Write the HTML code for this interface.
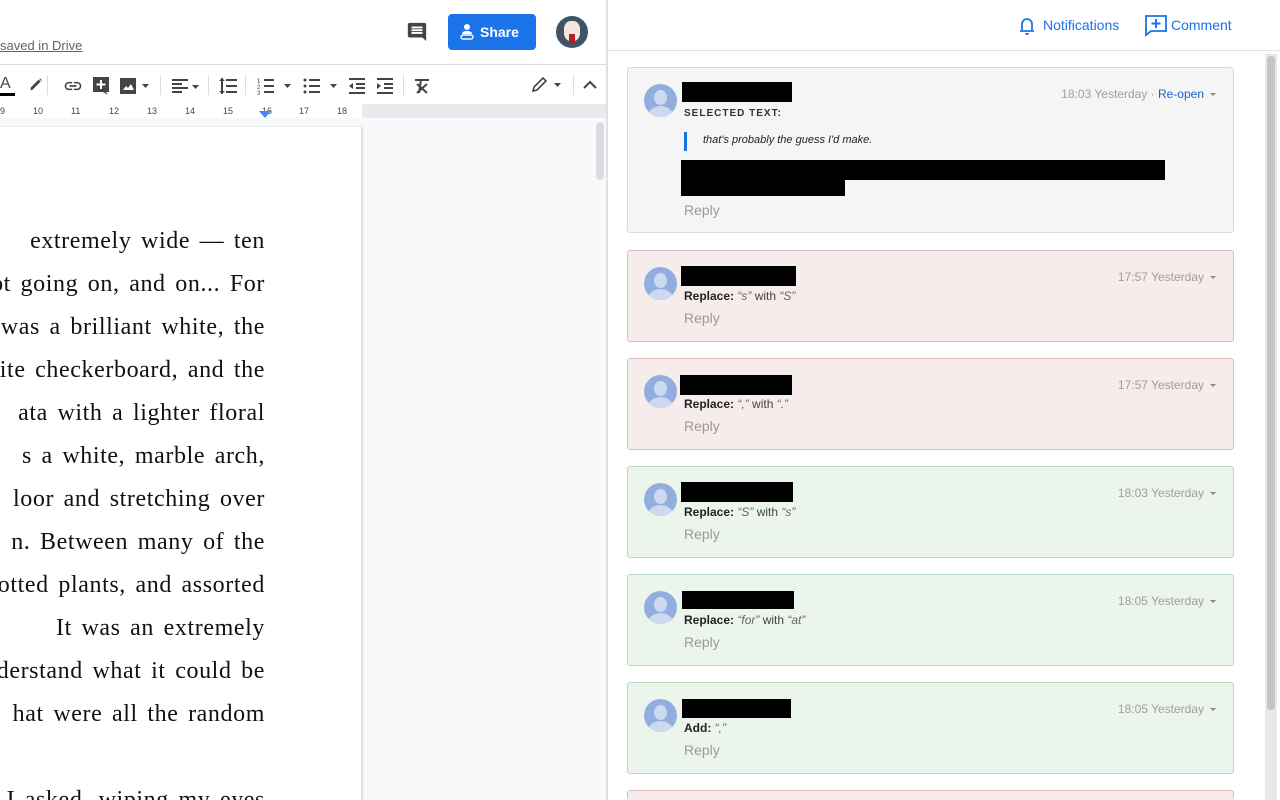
<!DOCTYPE html>
<html><head><meta charset="utf-8"><style>
*{margin:0;padding:0;box-sizing:border-box}
html,body{width:1280px;height:800px;overflow:hidden}
body{position:relative;background:#fff;font-family:"Liberation Sans",sans-serif}
.a{position:absolute}
.doc{left:0;top:118px;width:606px;height:682px;background:#f8f9fa;overflow:hidden}
.page{left:0;top:9px;width:362px;height:700px;background:#fff;border-right:1px solid #dadce0;box-shadow:1px 0 2px rgba(0,0,0,.12)}
.ln{position:absolute;right:341px;white-space:nowrap;font-family:"Liberation Serif",serif;font-size:24px;color:#111;text-align:right;letter-spacing:0.6px;word-spacing:3px}
.card{position:absolute;left:627px;width:607px;border:1px solid;border-radius:3px}
.g{background:#f5f5f5;border-color:#dadada}
.p{background:#f6eceb;border-color:#dcbcba}
.n{background:#ebf5ec;border-color:#bcd9bf}
.av{position:absolute;left:16px;width:33px;height:33px;border-radius:50%;background:#92aedf;overflow:hidden}
.av:before{content:"";position:absolute;left:10px;top:6px;width:13px;height:15px;border-radius:50%;background:#ccd9f0}
.av:after{content:"";position:absolute;left:4px;top:22px;width:25px;height:20px;border-radius:50%;background:#ccd9f0}
.nm{position:absolute;background:#000;height:20px}
.ts{position:absolute;right:29px;font-family:"Liberation Sans Narrow","Liberation Sans",sans-serif;font-size:12px;color:#9e9e9e}
.ar{position:absolute;right:17px;width:0;height:0;border-left:3px solid transparent;border-right:3px solid transparent;border-top:3px solid #888}
.tx{position:absolute;left:56px;font-family:"Liberation Sans Narrow","Liberation Sans",sans-serif;font-size:12px;color:#444}
.tx b{color:#222}
.tx i{color:#666}
.rp{position:absolute;left:56px;font-family:"Liberation Sans Narrow","Liberation Sans",sans-serif;font-size:14px;color:#9a9a9a}
</style></head><body>
<div class="a" style="left:0;top:38px;font-size:13px;color:#5f6368;text-decoration:underline">saved in Drive</div>
<svg class="a" style="left:406px;top:21px" width="22" height="22" viewBox="0 0 24 24"><path fill="#444" d="M21.99 4c0-1.1-.89-2-1.99-2H4c-1.1 0-2 .9-2 2v12c0 1.1.9 2 2 2h14l4 4-.01-18zM18 14H6v-2h12v2zm0-3H6V9h12v2zm0-3H6V6h12v2z"/></svg>
<div class="a" style="left:448px;top:14px;width:88px;height:36px;background:#1a73e8;border-radius:4px;color:#fff;font-size:14px;font-weight:bold;line-height:36px;padding-left:32px">Share</div>
<svg class="a" style="left:459px;top:23px" width="16" height="18" viewBox="0 0 16 18"><circle cx="8" cy="4" r="3" fill="#fff"/><path d="M3 11c0-2 2-3 5-3s5 1 5 3z" fill="#fff"/><rect x="2" y="12" width="12" height="4" rx="2" fill="none" stroke="#fff" stroke-width="1.4"/></svg>
<div class="a" style="left:556px;top:16px;width:32px;height:32px;border-radius:50%;background:#3d5566;overflow:hidden"><div class="a" style="left:8px;top:5px;width:16px;height:20px;background:#f3e6df;border-radius:40%"></div><div class="a" style="left:13px;top:18px;width:6px;height:10px;background:#b0202a"></div></div>
<div class="a" style="left:0;top:64px;width:606px;height:1px;background:#dadce0"></div>
<div class="a" style="left:0;top:75px;font-size:16px;color:#444">A</div>
<div class="a" style="left:0;top:93px;width:15px;height:3px;background:#000"></div>
<svg class="a" style="left:28px;top:77px" width="16" height="16" viewBox="0 0 24 24"><path fill="#444" d="M4 20l3-1 12-12-3-3L4 16zM17 3l3 3 1-1-3-3z"/></svg>
<div class="a" style="left:47px;top:75px;width:1px;height:20px;background:#dadce0"></div>
<svg class="a" style="left:63px;top:76px" width="20" height="20" viewBox="0 0 24 24"><path fill="#444" d="M3.9 12c0-1.71 1.39-3.1 3.1-3.1h4V7H7c-2.76 0-5 2.24-5 5s2.24 5 5 5h4v-1.9H7c-1.71 0-3.1-1.39-3.1-3.1zM8 13h8v-2H8v2zm9-6h-4v1.9h4c1.71 0 3.1 1.39 3.1 3.1s-1.39 3.1-3.1 3.1h-4V17h4c2.76 0 5-2.24 5-5s-2.24-5-5-5z"/></svg>
<svg class="a" style="left:92px;top:76px" width="18" height="20" viewBox="0 0 18 20"><path fill="#444" d="M1 1h16v15h-3l2 3-5-3H1z"/><path stroke="#fff" stroke-width="2" d="M9 4v9M4.5 8.5h9"/></svg>
<svg class="a" style="left:120px;top:77px" width="32" height="18" viewBox="0 0 32 18"><rect x="0" y="1" width="16" height="16" fill="#444"/><path fill="#fff" d="M3 13l3-4 2 2 3-4 3 6z"/><path fill="#444" d="M22 7h7l-3.5 4z"/></svg>
<div class="a" style="left:160px;top:75px;width:1px;height:20px;background:#dadce0"></div>
<svg class="a" style="left:170px;top:78px" width="30" height="16" viewBox="0 0 30 16"><path stroke="#444" stroke-width="2" d="M2 2h16M2 6h10M2 10h16M2 14h10"/><path fill="#444" d="M22 7h7l-3.5 4z"/></svg>
<div class="a" style="left:208px;top:75px;width:1px;height:20px;background:#dadce0"></div>
<svg class="a" style="left:218px;top:77px" width="20" height="18" viewBox="0 0 20 18"><path stroke="#444" stroke-width="2" d="M8 3h11M8 9h11M8 15h11M4 1v16"/><path fill="#444" d="M1 4l3-3 3 3zM1 14l3 3 3-3z"/></svg>
<div class="a" style="left:245px;top:75px;width:1px;height:20px;background:#dadce0"></div>
<svg class="a" style="left:257px;top:77px" width="36" height="18" viewBox="0 0 36 18"><path stroke="#444" stroke-width="2" d="M7 3h10M7 9h10M7 15h10"/><text x="0" y="6" font-size="6" fill="#444">1</text><text x="0" y="12" font-size="6" fill="#444">2</text><text x="0" y="18" font-size="6" fill="#444">3</text><path fill="#444" d="M27 7h7l-3.5 4z"/></svg>
<svg class="a" style="left:303px;top:77px" width="36" height="18" viewBox="0 0 36 18"><path stroke="#444" stroke-width="2" d="M6 3h11M6 9h11M6 15h11"/><circle cx="2" cy="3" r="1.5" fill="#444"/><circle cx="2" cy="9" r="1.5" fill="#444"/><circle cx="2" cy="15" r="1.5" fill="#444"/><path fill="#444" d="M27 7h7l-3.5 4z"/></svg>
<svg class="a" style="left:348px;top:77px" width="18" height="18" viewBox="0 0 18 18"><path stroke="#444" stroke-width="2" d="M1 2h16M8 7h9M8 11h9M1 16h16"/><path fill="#444" d="M5 6v6l-4-3z"/></svg>
<svg class="a" style="left:376px;top:77px" width="18" height="18" viewBox="0 0 18 18"><path stroke="#444" stroke-width="2" d="M1 2h16M8 7h9M8 11h9M1 16h16"/><path fill="#444" d="M1 6v6l4-3z"/></svg>
<div class="a" style="left:403px;top:75px;width:1px;height:20px;background:#dadce0"></div>
<svg class="a" style="left:414px;top:78px" width="16" height="16" viewBox="0 0 16 16"><path stroke="#444" stroke-width="2" d="M1 2h14M7 2L5 15M3 6l10 9M13 6L3 15"/></svg>
<svg class="a" style="left:531px;top:77px" width="34" height="16" viewBox="0 0 34 16"><path fill="none" stroke="#444" stroke-width="1.6" d="M2 14l1-4 9-9 3 3-9 9z"/><path fill="#444" d="M23 6h7l-3.5 4z"/></svg>
<div class="a" style="left:573px;top:75px;width:1px;height:20px;background:#dadce0"></div>
<svg class="a" style="left:583px;top:80px" width="14" height="10" viewBox="0 0 14 10"><path fill="none" stroke="#444" stroke-width="2" d="M1 8l6-6 6 6"/></svg>
<div class="a" style="left:0;top:104px;width:606px;height:15px;background:#e8eaed"></div>
<div class="a" style="left:0;top:104px;width:362px;height:14px;background:#fff;font-size:9px;color:#444;line-height:14px;white-space:nowrap">
<span class="a" style="left:0">9</span><span class="a" style="left:33px">10</span><span class="a" style="left:71px">11</span><span class="a" style="left:109px">12</span><span class="a" style="left:147px">13</span><span class="a" style="left:185px">14</span><span class="a" style="left:223px">15</span><span class="a" style="left:262px">16</span><span class="a" style="left:299px">17</span><span class="a" style="left:337px">18</span></div>
<div class="a" style="left:259px;top:111px;width:0;height:0;border-left:6px solid transparent;border-right:6px solid transparent;border-top:7px solid #4285f4"></div>
<div class="a doc">
<div class="a page"></div>
<div class="ln" style="top:110px">extremely wide — ten</div>
<div class="ln" style="top:153px">ot going on, and on... For</div>
<div class="ln" style="top:196px">was a brilliant white, the</div>
<div class="ln" style="top:239px">ite checkerboard, and the</div>
<div class="ln" style="top:282px">ata with a lighter floral</div>
<div class="ln" style="top:325px">s a white, marble arch,</div>
<div class="ln" style="top:368px">loor and stretching over</div>
<div class="ln" style="top:411px">n. Between many of the</div>
<div class="ln" style="top:454px">otted plants, and assorted</div>
<div class="ln" style="top:497px">It was an extremely</div>
<div class="ln" style="top:540px">derstand what it could be</div>
<div class="ln" style="top:583px">hat were all the random</div>
<div class="ln" style="top:669px">I asked, wiping my eyes</div>
<div class="a" style="left:596px;top:4px;width:8px;height:58px;background:#dadce0;border-radius:4px"></div>
</div>
<div class="a" style="left:606px;top:0;width:2px;height:800px;background:#e0e0e0"></div>
<div class="a" style="left:608px;top:50px;width:672px;height:1px;background:#e0e0e0"></div>
<svg class="a" style="left:1019px;top:16px" width="16" height="20" viewBox="0 0 16 20"><path fill="none" stroke="#1a73e8" stroke-width="1.8" d="M3 14V8a5 5 0 0110 0v6M1 15h14"/><path fill="#1a73e8" d="M6 17h4a2 2 0 01-4 0z"/></svg>
<div class="a" style="left:1043px;top:17px;font-size:14px;color:#1a73e8">Notifications</div>
<svg class="a" style="left:1145px;top:15px" width="22" height="22" viewBox="0 0 22 22"><path fill="none" stroke="#1a73e8" stroke-width="1.8" d="M1 1h20v15H6l-5 4z"/><path stroke="#1a73e8" stroke-width="2" d="M11 4v9M6.5 8.5h9"/></svg>
<div class="a" style="left:1171px;top:17px;font-size:14px;color:#1a73e8">Comment</div>
<div class="a" style="left:1265px;top:54px;width:12px;height:746px;background:#e8e8e8"></div>
<div class="a" style="left:1267px;top:56px;width:8px;height:654px;background:#c4c4c4;border-radius:4px"></div>

<div class="card g" style="top:67px;height:166px">
<div class="av" style="top:16px"></div>
<div class="nm" style="left:54px;top:14px;width:110px"></div>
<div class="a" style="right:29px;top:19px;font-family:'Liberation Sans Narrow','Liberation Sans',sans-serif;font-size:12px;color:#9e9e9e">18:03 Yesterday · <span style="color:#1a5fd0">Re-open</span></div>
<div class="ar" style="top:25px"></div>
<div class="a" style="left:56px;top:40px;font-size:10px;font-weight:bold;letter-spacing:1px;color:#333">SELECTED TEXT:</div>
<div class="a" style="left:56px;top:64px;width:3px;height:19px;background:#1a73e8"></div>
<div class="a" style="left:75px;top:66px;font-size:11px;font-style:italic;color:#222">that's probably the guess I'd make.</div>
<div class="nm" style="left:53px;top:92px;width:484px"></div>
<div class="nm" style="left:53px;top:110px;width:164px;height:18px"></div>
<div class="rp" style="top:134px">Reply</div>
</div>

<div class="card p" style="top:250px;height:92px">
<div class="av" style="top:16px"></div><div class="nm" style="left:53px;top:15px;width:115px"></div>
<div class="ts" style="top:19px">17:57 Yesterday</div><div class="ar" style="top:25px"></div>
<div class="tx" style="top:38px"><b>Replace:</b> <i>“s”</i> with <i>“S”</i></div><div class="rp" style="top:59px">Reply</div></div>

<div class="card p" style="top:358px;height:92px">
<div class="av" style="top:16px"></div><div class="nm" style="left:52px;top:16px;width:112px"></div>
<div class="ts" style="top:19px">17:57 Yesterday</div><div class="ar" style="top:25px"></div>
<div class="tx" style="top:38px"><b>Replace:</b> <i>“,”</i> with <i>“.”</i></div><div class="rp" style="top:59px">Reply</div></div>

<div class="card n" style="top:466px;height:92px">
<div class="av" style="top:16px"></div><div class="nm" style="left:53px;top:15px;width:112px"></div>
<div class="ts" style="top:19px">18:03 Yesterday</div><div class="ar" style="top:25px"></div>
<div class="tx" style="top:38px"><b>Replace:</b> <i>“S”</i> with <i>“s”</i></div><div class="rp" style="top:59px">Reply</div></div>

<div class="card n" style="top:574px;height:92px">
<div class="av" style="top:16px"></div><div class="nm" style="left:54px;top:16px;width:112px;height:18px"></div>
<div class="ts" style="top:19px">18:05 Yesterday</div><div class="ar" style="top:25px"></div>
<div class="tx" style="top:38px"><b>Replace:</b> <i>“for”</i> with <i>“at”</i></div><div class="rp" style="top:59px">Reply</div></div>

<div class="card n" style="top:682px;height:92px">
<div class="av" style="top:16px"></div><div class="nm" style="left:54px;top:16px;width:109px;height:19px"></div>
<div class="ts" style="top:19px">18:05 Yesterday</div><div class="ar" style="top:25px"></div>
<div class="tx" style="top:38px"><b>Add:</b> <i>“,”</i></div><div class="rp" style="top:59px">Reply</div></div>

<div class="card p" style="top:790px;height:10px;border-bottom:none"></div>
</body></html>
